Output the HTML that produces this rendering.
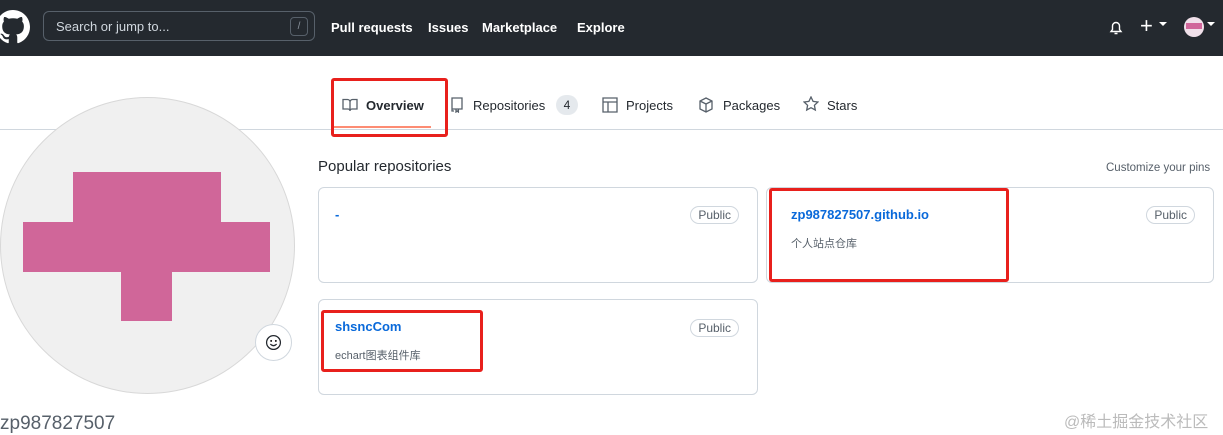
<!DOCTYPE html><html><head><meta charset="utf-8"><style>
*{box-sizing:border-box;margin:0;padding:0}
body{width:1223px;height:435px;overflow:hidden;background:#fff;font-family:"Liberation Sans","Noto Sans CJK SC",sans-serif;position:relative;color:#24292f}
.hd{position:absolute;left:0;top:0;width:1223px;height:56px;background:#24292f}
.abs{position:absolute}
.nav{color:#fff;font-weight:bold;font-size:13px;top:20px}
.tab{top:98px;font-size:13px;color:#24292f}
.card{position:absolute;border:1px solid #d0d7de;border-radius:6px;background:#fff}
.pub{position:absolute;right:18px;top:18px;border:1px solid #d0d7de;border-radius:10px;font-size:12px;padding:1px 7px;color:#57606a}
.name{position:absolute;left:16px;top:19px;color:#0969da;font-weight:bold;font-size:13px}
.desc{position:absolute;left:16px;top:47px;font-size:11px;color:#57606a}
.red{position:absolute;border:3px solid #e8201c;border-radius:3px}
</style></head><body>
<div class="hd"></div>
<svg class="abs" style="left:-4px;top:10px" width="34" height="34" viewBox="0 0 16 16"><path fill="#fff" d="M8 0C3.58 0 0 3.58 0 8c0 3.54 2.29 6.530 5.470 7.59.4.07.55-.17.55-.38 0-.19-.01-.82-.01-1.49-2.01.37-2.530-.49-2.690-.94-.09-.23-.48-.94-.82-1.13-.28-.15-.68-.52-.01-.53.63-.01 1.08.58 1.23.82.72 1.21 1.87.87 2.33.66.07-.52.28-.87.51-1.07-1.78-.2-3.64-.89-3.64-3.95 0-.87.31-1.59.82-2.15-.08-.2-.36-1.02.08-2.12 0 0 .67-.21 2.2.82.64-.18 1.32-.27 2-.27.68 0 1.36.09 2 .27 1.53-1.04 2.2-.82 2.2-.82.44 1.1.16 1.92.08 2.12.51.56.82 1.27.82 2.15 0 3.07-1.87 3.75-3.65 3.95.29.25.54.73.54 1.48 0 1.070-.01 1.93-.01 2.2 0 .21.15.46.55.38A8.013 8.013 0 0016 8c0-4.42-3.58-8-8-8z"/></svg>
<div class="abs" style="left:43px;top:11px;width:272px;height:30px;border:1px solid #57606a;border-radius:6px"></div>
<div class="abs" style="left:56px;top:19px;color:#d0d7de;font-size:13px">Search or jump to...</div>
<div class="abs" style="left:290px;top:17px;width:18px;height:19px;border:1px solid #57606a;border-radius:4px;color:#8c959f;font-size:10px;text-align:center;line-height:17px">/</div>
<div class="abs nav" style="left:331px">Pull requests</div>
<div class="abs nav" style="left:428px">Issues</div>
<div class="abs nav" style="left:482px">Marketplace</div>
<div class="abs nav" style="left:577px">Explore</div>
<svg class="abs" style="left:1108px;top:19px" width="16" height="17" viewBox="0 0 16 16"><path fill="none" stroke="#fff" stroke-width="1.4" d="M3 12h10l-1.5-2V6.5a3.5 3.5 0 00-7 0V10zM6.5 14h3"/></svg>
<div class="abs" style="left:1140px;top:13px;color:#fff;font-size:22px">+</div>
<div class="abs" style="left:1159px;top:22px;border:4px solid transparent;border-top-color:#fff"></div>
<div class="abs" style="left:1184px;top:17px;width:20px;height:20px;border-radius:50%;background:#f0e0ea;overflow:hidden"><div style="margin:6px 2px;height:6px;background:#d0669a"></div></div>
<div class="abs" style="left:1207px;top:22px;border:4px solid transparent;border-top-color:#fff"></div>
<div class="abs" style="left:0;top:129px;width:1223px;height:1px;background:#d0d7de"></div>
<svg class="abs" style="left:342px;top:97px" width="16" height="16" viewBox="0 0 16 16"><path fill="none" stroke="#57606a" stroke-width="1.3" d="M1 2.5h4.5A2.5 2.5 0 018 5v9a2 2 0 00-2-2H1zM15 2.5h-4.5A2.5 2.5 0 008 5v9a2 2 0 012-2h5z"/></svg>
<div class="abs tab" style="left:366px;font-weight:bold">Overview</div>
<div class="abs" style="left:334px;top:126px;width:97px;height:2px;background:#fd8c73"></div>
<svg class="abs" style="left:450px;top:97px" width="14" height="16" viewBox="0 0 14 16"><path fill="none" stroke="#57606a" stroke-width="1.3" d="M2 1h10v11H2zM2 12v2h2M6 12v3l1.2-1 1.2 1v-3"/></svg>
<div class="abs tab" style="left:473px">Repositories</div>
<div class="abs" style="left:556px;top:95px;width:22px;height:20px;border-radius:10px;background:#e5e9ed;font-size:12px;text-align:center;line-height:20px">4</div>
<svg class="abs" style="left:602px;top:97px" width="16" height="16" viewBox="0 0 16 16"><path fill="none" stroke="#57606a" stroke-width="1.3" d="M1 1h14v14H1zM1 5h14M6 5v10"/></svg>
<div class="abs tab" style="left:626px">Projects</div>
<svg class="abs" style="left:698px;top:97px" width="16" height="16" viewBox="0 0 16 16"><path fill="none" stroke="#57606a" stroke-width="1.3" d="M8 1l6 3v8l-6 3-6-3V4zM2 4l6 3 6-3M8 7v8"/></svg>
<div class="abs tab" style="left:723px">Packages</div>
<svg class="abs" style="left:803px;top:96px" width="16" height="16" viewBox="0 0 16 16"><path fill="none" stroke="#57606a" stroke-width="1.3" d="M8 1l2.1 4.4 4.8.6-3.5 3.3.9 4.7L8 11.7 3.7 14l.9-4.7L1.1 6l4.8-.6z"/></svg>
<div class="abs tab" style="left:827px">Stars</div>
<div class="red" style="left:331px;top:78px;width:117px;height:59px"></div>
<div class="abs" style="left:0;top:97px;width:295px;height:297px;border-radius:50%;background:#f0f0f0;border:1px solid #d8d8d8;overflow:hidden">
<div class="abs" style="left:72px;top:74px;width:148px;height:100px;background:#d06699"></div>
<div class="abs" style="left:22px;top:124px;width:247px;height:50px;background:#d06699"></div>
<div class="abs" style="left:120px;top:173px;width:51px;height:50px;background:#d06699"></div>
</div>
<div class="abs" style="left:255px;top:324px;width:37px;height:37px;border-radius:50%;background:#fff;border:1px solid #d0d7de"></div>
<svg class="abs" style="left:265px;top:334px" width="17" height="17" viewBox="0 0 16 16"><circle cx="8" cy="8" r="6.5" fill="none" stroke="#24292f" stroke-width="1.2"/><circle cx="5.8" cy="6.5" r=".9"/><circle cx="10.2" cy="6.5" r=".9"/><path d="M5 9.5q3 3 6 0" fill="none" stroke="#24292f" stroke-width="1.2"/></svg>
<div class="abs" style="left:0;top:413px;font-size:19px;color:#57606a">zp987827507</div>
<div class="abs" style="left:318px;top:158px;font-size:15px">Popular repositories</div>
<div class="abs" style="left:1106px;top:162px;font-size:11.5px;color:#57606a">Customize your pins</div>
<div class="card" style="left:318px;top:187px;width:440px;height:96px"><div class="name" style="top:19px">-</div><div class="pub">Public</div></div>
<div class="card" style="left:766px;top:187px;width:448px;height:96px"><div class="name" style="left:24px">zp987827507.github.io</div><div class="desc" style="left:24px">个人站点仓库</div><div class="pub">Public</div></div>
<div class="card" style="left:318px;top:299px;width:440px;height:96px"><div class="name">shsncCom</div><div class="desc">echart图表组件库</div><div class="pub" style="top:19px">Public</div></div>
<div class="red" style="left:769px;top:188px;width:240px;height:94px"></div>
<div class="red" style="left:321px;top:310px;width:162px;height:62px"></div>
<div class="abs" style="left:1064px;top:408px;font-size:16px;color:#bbb">@稀土掘金技术社区</div>
</body></html>
